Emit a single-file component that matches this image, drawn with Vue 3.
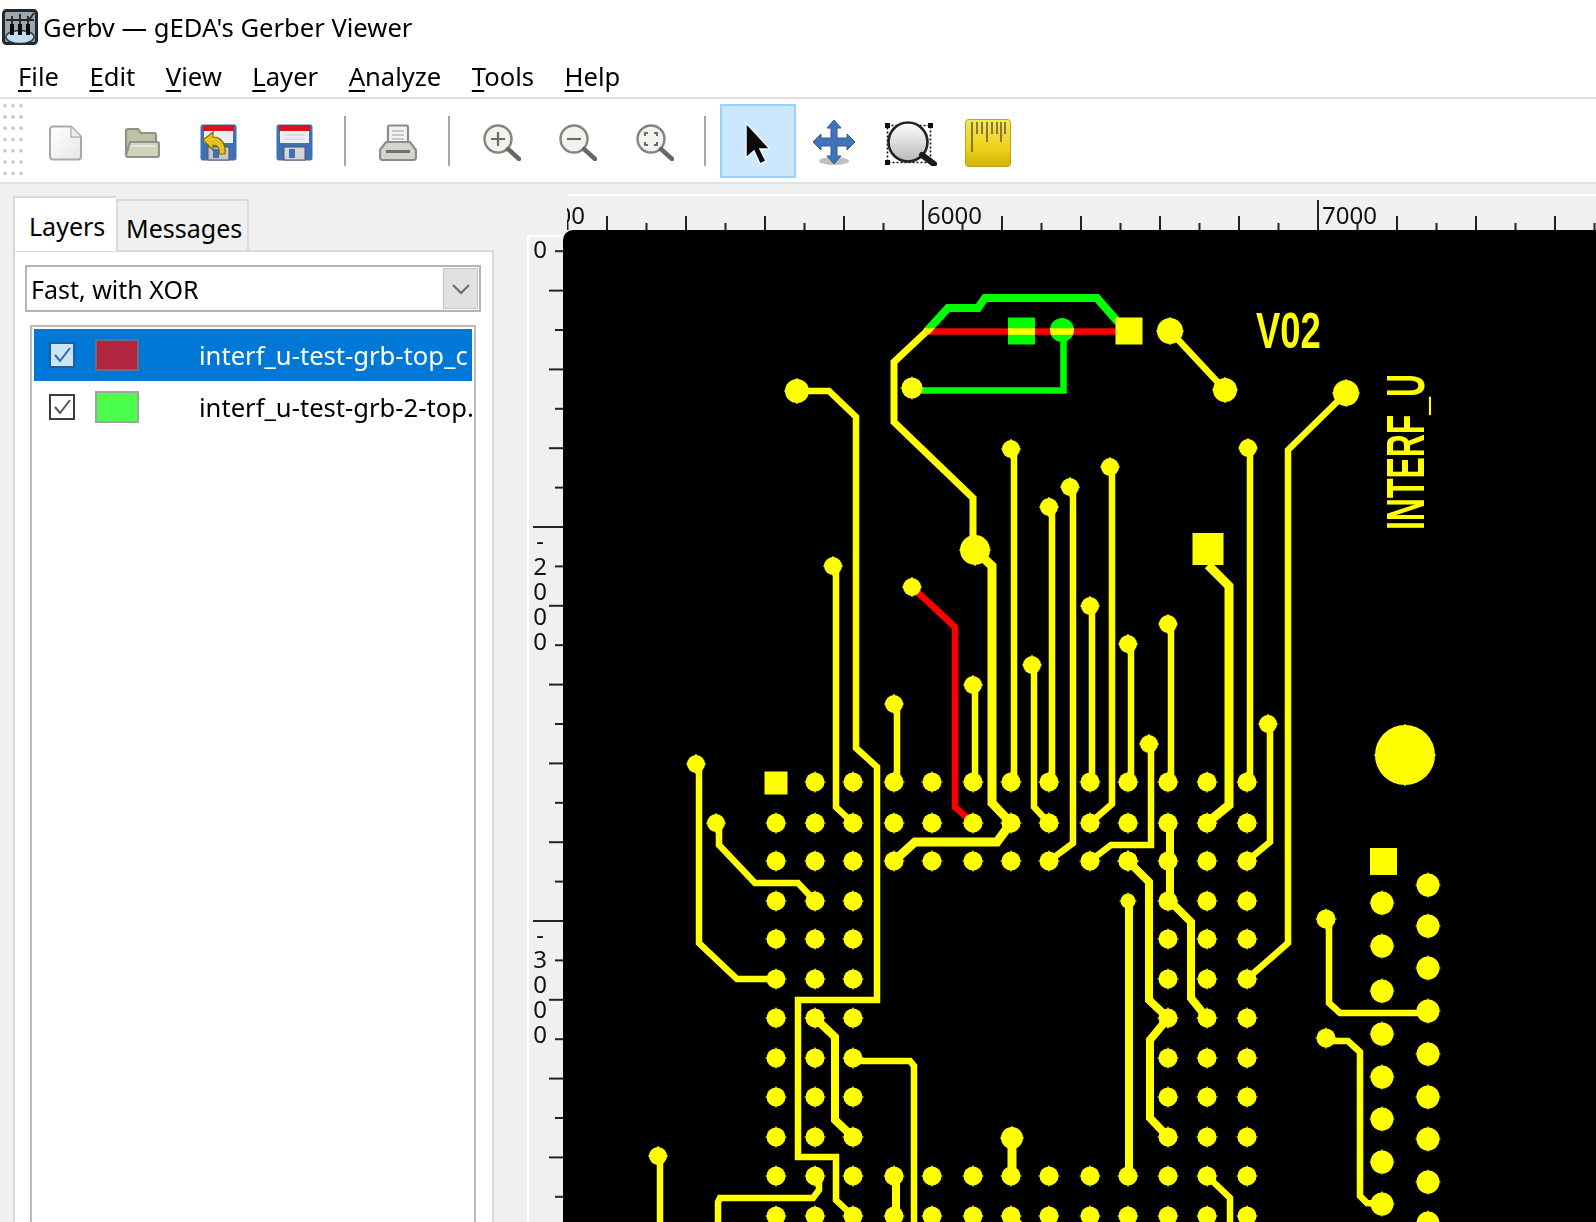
<script setup>
const cols = [776, 815, 853, 894, 932, 973, 1011, 1049, 1090, 1128, 1168, 1207, 1247]
const rows = [782, 823, 861, 901, 939, 979, 1018, 1058, 1097, 1137, 1176, 1216]
const fullRows = [782, 823, 861, 1176, 1216]
const sideCols = [776, 815, 853, 1168, 1207, 1247]

// [x, y, r]
const pads = []
for (const y of rows) {
  for (const x of cols) {
    if (x === 776 && y === 782) continue
    if (fullRows.includes(y) || sideCols.includes(x)) pads.push([x, y, 9.5])
  }
}
for (const y of [903, 946, 991, 1034, 1077, 1119, 1162, 1204]) pads.push([1382, y, 11.5])
for (const y of [885, 926, 968, 1011, 1054, 1097, 1139, 1182, 1223]) pads.push([1428, y, 11.5])
pads.push(
  [797, 391, 12], [912, 388, 10.5], [1170, 331, 13], [1225, 390, 12], [1346, 393, 13],
  [975, 550, 15], [1011, 449, 9], [1248, 448, 9], [1110, 467, 9], [1070, 487, 9],
  [1049, 507, 9], [1090, 606, 9], [1128, 644, 9], [1168, 624, 9], [1149, 744, 9],
  [1268, 724, 9], [833, 566, 9], [696, 764, 9], [716, 823, 9], [894, 704, 9],
  [973, 685, 9], [912, 587, 9], [1032, 665, 9], [1128, 861, 9.5], [1128, 901, 7.5],
  [1326, 919, 9.5], [1326, 1038, 9.5], [658, 1156, 9], [1012, 1138, 11], [1405, 755, 30]
)

const squares = [
  [764.5, 771.5, 23, 23],
  [1115.5, 317.5, 27, 27],
  [1192.5, 533, 31, 32],
  [1370, 848, 27, 27]
]

const traces = [
  { w: 7, p: '926,332 894,362 894,422 973,498 973,537' },
  { w: 9, p: '975,550 992,566 992,803 1011,823 997,842 915,842 894,861' },
  { w: 6.5, p: '1170,331 1225,390' },
  { w: 6.5, p: '1346,393 1288,450 1288,943 1247,979' },
  { w: 6.5, p: '1014,452 1014,782' },
  { w: 6.5, p: '1250,452 1250,782' },
  { w: 6.5, p: '1112,470 1112,804 1090,823' },
  { w: 6.5, p: '1073,490 1073,843 1049,861' },
  { w: 6.5, p: '1052,510 1052,782' },
  { w: 6.5, p: '1092,610 1092,782' },
  { w: 6.5, p: '1131,648 1131,782' },
  { w: 6.5, p: '1171,628 1171,782' },
  { w: 6.5, p: '1151,748 1151,845 1111,845 1090,861' },
  { w: 6.5, p: '1270,728 1270,842 1247,861' },
  { w: 9, p: '1208,565 1229,586 1229,805 1207,823' },
  { w: 6.5, p: '836,570 836,807 853,823' },
  { w: 6.5, p: '797,391 829,391 856,417 856,748 877,767 877,1000 798,1000 798,1157 836,1157 836,1200 853,1216' },
  { w: 6.5, p: '699,768 699,943 737,979 776,979' },
  { w: 6.5, p: '719,827 719,845 755,883 798,883 815,901' },
  { w: 6.5, p: '897,708 897,782' },
  { w: 6.5, p: '975,690 975,782' },
  { w: 6.5, p: '1034,670 1034,807 1049,823' },
  { w: 8, p: '1170,826 1170,901 1191,922 1191,998 1207,1018' },
  { w: 8, p: '1128,861 1149,882 1149,1000 1168,1018 1150,1040 1150,1118 1168,1137' },
  { w: 8, p: '1129,905 1129,1176' },
  { w: 6.5, p: '1329,923 1329,1003 1340,1013 1428,1013' },
  { w: 6.5, p: '1326,1041 1348,1041 1360,1052 1360,1196 1367,1203 1382,1204' },
  { w: 8, p: '815,1018 835,1037 835,1120 853,1137' },
  { w: 6.5, p: '853,1061 910,1061 914,1066 914,1230' },
  { w: 6.5, p: '819,1180 819,1190 813,1198 720,1198 718,1202 718,1230' },
  { w: 6.5, p: '660,1160 660,1230' },
  { w: 8, p: '896,1180 896,1216' },
  { w: 9, p: '1012,1138 1012,1176' },
  { w: 8, p: '1011,1216 1030,1236' },
  { w: 6.5, p: '1207,1176 1230,1198 1230,1230' }
]

const topTicks = []
for (let k = -9; k <= 17; k++) {
  const major = k % 10 === 0
  const even = k % 2 === 0
  topTicks.push({ x: 923 + k * 39.5, y: major ? 200 : even ? 216 : 223 })
}
const leftTicks = []
for (let k = -7; k <= 17; k++) {
  const major = k % 10 === 0
  const even = k % 2 === 0
  leftTicks.push({ y: 527 + k * 39.4, x: major ? 533 : even ? 549 : 555 })
}
const leftLabels = [
  ['0', 258], ['-', 549], ['2', 575], ['0', 600], ['0', 625], ['0', 650],
  ['-', 943], ['3', 968], ['0', 993], ['0', 1018], ['0', 1043]
]

const menus = [
  { key: 'F', rest: 'ile' },
  { key: 'E', rest: 'dit' },
  { key: 'V', rest: 'iew' },
  { key: 'L', rest: 'ayer' },
  { key: 'A', rest: 'nalyze' },
  { key: 'T', rest: 'ools' },
  { key: 'H', rest: 'elp' }
]
</script>

<template>
  <div class="app">
    <header class="titlebar">
      <svg class="appicon" width="36" height="36" viewBox="0 0 36 36">
        <rect x="1.5" y="1.5" width="33" height="33" rx="3" fill="#9aa7b0" stroke="#24282b" stroke-width="3" />
        <ellipse cx="18" cy="28" rx="14" ry="6.5" fill="#c4dcee" stroke="#2e3438" stroke-width="1.5" />
        <path d="M10 7v10M18 5v12M26 7v10" stroke="#111" stroke-width="1.6" fill="none" />
        <path d="M10 15v11M18 15v11M26 15v11" stroke="#0b0b0b" stroke-width="4" fill="none" />
        <path d="M4 11h28M27 11l5-7" stroke="#23272a" stroke-width="1.8" fill="none" />
      </svg>
      <span class="title">Gerbv — gEDA's Gerber Viewer</span>
    </header>

    <nav class="menubar">
      <span v-for="m in menus" :key="m.key" class="menu"><span class="mn">{{ m.key }}</span>{{ m.rest }}</span>
    </nav>

    <div class="toolbar">
      <div class="grip"></div>
      <div class="tool">
        <svg width="34" height="36" viewBox="0 0 34 36">
          <defs>
            <linearGradient id="paper" x1="0" y1="0" x2="1" y2="1">
              <stop offset="0" stop-color="#ffffff" />
              <stop offset="1" stop-color="#e6e6e4" />
            </linearGradient>
          </defs>
          <path d="M4 1.5h18l10 10v20a3 3 0 0 1-3 3H4a3 3 0 0 1-3-3v-27a3 3 0 0 1 3-3z" fill="url(#paper)" stroke="#a9aaa4" stroke-width="2" />
          <path d="M22 2v10h10" fill="#ececea" stroke="#b5b6b0" stroke-width="1.5" />
        </svg>
      </div>
      <div class="tool">
        <svg width="36" height="32" viewBox="0 0 36 32">
          <path d="M2 28V4a2 2 0 0 1 2-2h10l3 4h13a2 2 0 0 1 2 2v6" fill="#bcc3a3" stroke="#8f9387" stroke-width="2.2" />
          <path d="M6 15h27a2 2 0 0 1 2 2v11a2 2 0 0 1-2 2H4a2 2 0 0 1-2-2z" fill="#cfd5ba" stroke="#8f9387" stroke-width="2.2" />
          <path d="M6 19h26" stroke="#e4e8d6" stroke-width="2" />
        </svg>
      </div>
      <div class="tool">
        <svg width="37" height="37" viewBox="0 0 37 37">
          <rect x="0.5" y="0.5" width="36" height="36" rx="2.5" fill="#3f6fb4" />
          <rect x="3" y="1" width="31" height="6" fill="#d9141c" />
          <rect x="4" y="7" width="29" height="12" fill="#eceff2" />
          <rect x="8" y="23" width="21" height="13" fill="#c6c8c8" stroke="#555" />
          <rect x="13" y="25" width="6" height="9" fill="#3f6fb4" />
          <path d="M3 16l10-8v5c7 0 13 5 12 17h-6c1-6-1-9-6-9v5z" fill="#e6c41b" stroke="#7c6b14" stroke-width="1.2" />
        </svg>
      </div>
      <div class="tool">
        <svg width="37" height="37" viewBox="0 0 37 37">
          <rect x="0.5" y="0.5" width="36" height="36" rx="2.5" fill="#3f6fb4" />
          <rect x="3" y="1" width="31" height="6" fill="#d9141c" />
          <rect x="4" y="7" width="29" height="12" fill="#eceff2" />
          <path d="M8 11h21M8 15h21" stroke="#d5d8dc" stroke-width="1.4" />
          <rect x="8" y="23" width="21" height="13" fill="#d4d6d6" stroke="#555" />
          <rect x="13" y="25" width="6" height="9" fill="#3f6fb4" />
        </svg>
      </div>
      <div class="sep"></div>
      <div class="tool">
        <svg width="38" height="37" viewBox="0 0 38 37">
          <rect x="9" y="1.5" width="20" height="20" rx="1.5" fill="#f3f3f1" stroke="#8c8d88" stroke-width="2.2" />
          <path d="M13 7h12M13 11h12M13 15h12" stroke="#bcbcb8" stroke-width="1.5" />
          <path d="M7 18h24l6 8v7a3 3 0 0 1-3 3H4a3 3 0 0 1-3-3v-7z" fill="#d3d3cf" stroke="#8c8d88" stroke-width="2.2" />
          <path d="M7 27.5h24" stroke="#6f706c" stroke-width="3" />
        </svg>
      </div>
      <div class="sep"></div>
      <div class="tool">
        <svg width="38" height="37" viewBox="0 0 38 37">
          <circle cx="15" cy="15" r="13.5" fill="#f1f3ef" stroke="#83857f" stroke-width="2.4" />
          <path d="M8 15h14M15 8v14" stroke="#6b6d68" stroke-width="2.2" />
          <path d="M25 25l11 10" stroke="#666862" stroke-width="4.4" stroke-linecap="round" />
        </svg>
      </div>
      <div class="tool">
        <svg width="38" height="37" viewBox="0 0 38 37">
          <circle cx="15" cy="15" r="13.5" fill="#f1f3ef" stroke="#83857f" stroke-width="2.4" />
          <path d="M8 15h14" stroke="#6b6d68" stroke-width="2.2" />
          <path d="M25 25l11 10" stroke="#666862" stroke-width="4.4" stroke-linecap="round" />
        </svg>
      </div>
      <div class="tool">
        <svg class="nudge" width="38" height="37" viewBox="0 0 38 37">
          <circle cx="15" cy="15" r="13.5" fill="#f1f3ef" stroke="#83857f" stroke-width="2.4" />
          <path d="M12 9H9v3M18 9h3v3M12 21H9v-3M18 21h3v-3" stroke="#6b6d68" stroke-width="2" fill="none" />
          <path d="M25 25l11 10" stroke="#666862" stroke-width="4.4" stroke-linecap="round" />
        </svg>
      </div>
      <div class="sep"></div>
      <div class="tool active">
        <svg class="pointer" width="30" height="46" viewBox="0 0 30 46">
          <path d="M6 3v35l8-7 6 13 6-3-6-12h10z" fill="#0b0b0b" stroke="#f4f8fb" stroke-width="1.5" />
        </svg>
      </div>
      <div class="tool">
        <svg width="46" height="48" viewBox="0 0 46 48">
          <ellipse cx="23" cy="42" rx="15" ry="4" fill="#8a8a8a" opacity="0.55" />
          <path d="M23 1l7 8h-4v10h10v-4l8 8-8 8v-4H26v10h4l-7 8-7-8h4V27H10v4l-8-8 8-8v4h10V9h-4z" fill="#3f74b8" stroke="#2f5a94" stroke-width="1" />
        </svg>
      </div>
      <div class="tool">
        <svg class="nudge" width="54" height="46" viewBox="0 0 54 46">
          <defs>
            <linearGradient id="glass" x1="0" y1="0" x2="0" y2="1">
              <stop offset="0" stop-color="#ffffff" />
              <stop offset="1" stop-color="#b9b9b9" />
            </linearGradient>
          </defs>
          <rect x="3.5" y="5.5" width="43" height="37" fill="none" stroke="#111" stroke-width="1.6" stroke-dasharray="2 2" />
          <rect x="1" y="3" width="5" height="5" fill="#111" />
          <rect x="44" y="3" width="5" height="5" fill="#111" />
          <rect x="1" y="40" width="5" height="5" fill="#111" />
          <circle cx="24" cy="22" r="19.5" fill="url(#glass)" stroke="#222" stroke-width="2.6" />
          <path d="M38 35l12 9" stroke="#1a1a1a" stroke-width="6" stroke-linecap="round" />
        </svg>
      </div>
      <div class="tool">
        <svg class="nudge-more" width="46" height="48" viewBox="0 0 46 48">
          <defs>
            <linearGradient id="gold" x1="0" y1="0" x2="0" y2="1">
              <stop offset="0" stop-color="#f6e65a" />
              <stop offset="0.6" stop-color="#eed21a" />
              <stop offset="1" stop-color="#d3b408" />
            </linearGradient>
          </defs>
          <rect x="0.5" y="0.5" width="45" height="47" rx="3" fill="url(#gold)" stroke="#b9a31f" />
          <path d="M7 3v30M12 3v12M17 3v12M22 3v20M27 3v12M32 3v12M36 3v20M40 3v12" stroke="#6e6130" stroke-width="1.6" />
        </svg>
      </div>
    </div>

    <main class="main">
      <aside class="side">
        <div class="tabs">
          <div class="tab current">Layers</div>
          <div class="tab">Messages</div>
        </div>
        <div class="panel">
          <div class="combo">
            <span class="combo-text">Fast, with XOR</span>
            <span class="combo-btn">
              <svg width="20" height="12" viewBox="0 0 20 12">
                <path d="M2 2l8 8 8-8" fill="none" stroke="#6a6a6a" stroke-width="2" />
              </svg>
            </span>
          </div>
          <div class="list">
            <div class="row selected">
              <span class="check">
                <svg width="22" height="22" viewBox="0 0 22 22">
                  <path d="M4 11l5 6 10-13" fill="none" stroke="#2a6aa8" stroke-width="2" />
                </svg>
              </span>
              <span class="swatch red"></span>
              <span class="name">interf_u-test-grb-top_c</span>
            </div>
            <div class="row">
              <span class="check">
                <svg width="22" height="22" viewBox="0 0 22 22">
                  <path d="M4 11l5 6 10-13" fill="none" stroke="#555" stroke-width="2" />
                </svg>
              </span>
              <span class="swatch green"></span>
              <span class="name">interf_u-test-grb-2-top.</span>
            </div>
          </div>
        </div>
      </aside>

      <section class="view">
        <div class="corner"></div>
        <svg class="ruler-top" viewBox="567 194 1029 36" preserveAspectRatio="xMinYMin">
          <rect x="567" y="194" width="1029" height="2" fill="#fff" />
          <path v-for="t in topTicks" :key="t.x" :d="`M${t.x} ${t.y}V230`" stroke="#222" stroke-width="2" />
          <text class="ruler-text" x="530" y="224">5000</text>
          <text class="ruler-text" x="927" y="224">6000</text>
          <text class="ruler-text" x="1322" y="224">7000</text>
        </svg>
        <svg class="ruler-left" viewBox="527 235 36 987" preserveAspectRatio="xMinYMin">
          <rect x="527" y="235" width="2" height="987" fill="#fff" />
          <rect x="527" y="235" width="36" height="2" fill="#fff" />
          <path v-for="t in leftTicks" :key="t.y" :d="`M${t.x} ${t.y}H563`" stroke="#222" stroke-width="2" />
          <text v-for="l in leftLabels" :key="l[1]" class="ruler-text" x="540" :y="l[1]" text-anchor="middle">{{ l[0] }}</text>
        </svg>

        <svg class="board" viewBox="563 230 1033 992" preserveAspectRatio="xMinYMin">
          <g class="layer-green">
            <polyline points="926,332 948,308 978,308 985,298 1097,298 1118,322" fill="none" stroke="#0f0" stroke-width="8" />
            <polyline points="1063.5,330 1063.5,390.5 912,390.5" fill="none" stroke="#0f0" stroke-width="6.5" />
            <rect x="1008" y="317.5" width="27" height="27" fill="#0f0" />
            <circle cx="1062" cy="330" r="12" fill="#0f0" />
          </g>
          <g class="layer-red">
            <line x1="924" y1="331.5" x2="1118" y2="331.5" stroke="#f00" stroke-width="6.5" />
            <polyline points="912,587 955,627 955,807 973,823" fill="none" stroke="#f00" stroke-width="6.5" />
          </g>

          <g fill="none" stroke="#ff0" stroke-linejoin="miter">
            <polyline v-for="t in traces" :key="t.p" :points="t.p" :stroke-width="t.w" />
          </g>
          <g fill="#ff0">
            <rect v-for="s in squares" :key="s[0]" :x="s[0]" :y="s[1]" :width="s[2]" :height="s[3]" />
            <template v-for="p in pads" :key="`${p[0]}-${p[1]}`">
              <circle :cx="p[0]" :cy="p[1]" :r="p[2]" />
              <path :d="`M${p[0] - p[2] - 1} ${p[1]}h${2 * p[2] + 2}M${p[0]} ${p[1] - p[2] - 1}v${2 * p[2] + 2}`" stroke="#ff0" stroke-width="1.2" />
            </template>
          </g>
          <text class="silk" transform="translate(1256 348) scale(1.3 1.8)">V02</text>
          <text class="silk" transform="translate(1424 530) rotate(-90) scale(1.14 1.9)">INTERF_U</text>
        </svg>
      </section>
    </main>
  </div>
</template>

<style>
html, body {
  margin: 0;
  background: #f0f0f0;
  overflow: hidden;
}
</style>

<style scoped>
.app {
  width: 1596px;
  height: 1222px;
  display: flex;
  flex-direction: column;
  font-family: "Noto Sans", "Open Sans", sans-serif;
  font-size: 25px;
  color: #000;
  overflow: hidden;
}

.titlebar {
  height: 54px;
  display: flex;
  align-items: center;
  background: #fff;
  padding-left: 2px;
}
.appicon {
  margin-right: 5px;
}
.title {
  font-size: 25.6px;
}

.menubar {
  height: 41px;
  padding-top: 2px;
  display: flex;
  align-items: center;
  gap: 30.5px;
  padding-left: 18px;
  background: #fff;
  border-bottom: 2px solid #e2e2e2;
  font-size: 25.6px;
}
.mn {
  text-decoration: underline;
  text-underline-offset: 4px;
}

.toolbar {
  height: 83px;
  display: flex;
  align-items: center;
  background: #fff;
  border-bottom: 2px solid #e2e2e2;
  padding-left: 28px;
  position: relative;
}
.grip {
  position: absolute;
  left: 1px;
  top: 1px;
  width: 24px;
  height: 83px;
  background-image: radial-gradient(circle, #c6c6c6 1.4px, transparent 2px);
  background-size: 8px 11.3px;
}
.tool {
  width: 76px;
  height: 74px;
  display: flex;
  align-items: center;
  justify-content: center;
  box-sizing: border-box;
}
.tool svg {
  margin-top: 4px;
}
.tool svg.pointer {
  margin-left: -6px;
}
.tool svg.nudge {
  margin-left: 2px;
}
.tool svg.nudge-more {
  margin-left: 4px;
}
.tool.active {
  background: #cce8ff;
  border: 2px solid #99d1ff;
}
.sep {
  width: 2px;
  height: 50px;
  background: #a8a8a8;
  margin: 0 14px 0 12px;
}

.main {
  flex: 1;
  min-height: 0;
  display: flex;
  background: #f0f0f0;
}

.side {
  width: 481px;
  margin-left: 13px;
  padding-top: 12px;
  display: flex;
  flex-direction: column;
}
.tabs {
  display: flex;
  align-items: flex-end;
  height: 55px;
  margin-bottom: -1px;
  position: relative;
  z-index: 1;
}
.tab {
  box-sizing: border-box;
  width: 133px;
  height: 51px;
  padding: 10px 0 0 8px;
  border: 2px solid #d9d9d9;
  border-bottom: none;
  background: #f0f0f0;
  margin-bottom: 1px;
}
.tab.current {
  width: 103px;
  height: 55px;
  padding: 11px 0 0 14px;
  background: #fff;
  border-right: none;
  margin-bottom: 0;
}
.panel {
  flex: 1;
  min-height: 0;
  overflow: hidden;
  box-sizing: border-box;
  background: #fff;
  border: 2px solid #d9d9d9;
  border-bottom: none;
  padding: 13px 11px 0 10px;
}
.combo {
  height: 47px;
  box-sizing: border-box;
  display: flex;
  align-items: center;
  border: 2px solid #b4b4b4;
  padding-left: 4px;
}
.combo-text {
  flex: 1;
}
.combo-btn {
  width: 37px;
  height: 100%;
  box-sizing: border-box;
  display: flex;
  align-items: center;
  justify-content: center;
  background: #e1e1e1;
  border: 2px solid #fff;
  outline: 1px solid #c8c8c8;
  outline-offset: -2px;
}
.list {
  margin: 13px 5px 0 5px;
  height: 920px;
  box-sizing: border-box;
  border: 2px solid #bcbcbc;
  padding: 2px;
  font-size: 25.6px;
}
.row {
  height: 52px;
  display: flex;
  align-items: center;
  overflow: hidden;
  white-space: nowrap;
}
.row.selected {
  background: #0078d7;
  color: #fff;
}
.check {
  flex: none;
  width: 26px;
  height: 26px;
  box-sizing: border-box;
  margin-left: 15px;
  display: flex;
  align-items: center;
  justify-content: center;
  border: 2px solid #3c3c3c;
  background: #fff;
}
.selected .check {
  background: #cce4f7;
  border-color: #1d5f99;
}
.swatch {
  flex: none;
  width: 44px;
  height: 32px;
  box-sizing: border-box;
  margin-left: 20px;
  border: 2px solid #a3a3a3;
}
.swatch.red {
  background: #b3243f;
  border-color: #6f6d86;
}
.swatch.green {
  background: #4cff4c;
}
.name {
  margin-left: 60px;
}

.view {
  flex: 1;
  min-width: 0;
  margin-left: 33px;
  margin-top: 10px;
  display: grid;
  grid-template-columns: 36px 1fr;
  grid-template-rows: 36px 1fr;
}
.ruler-top {
  display: block;
  width: 1029px;
  height: 36px;
  margin-left: 4px;
}
.ruler-left {
  display: block;
  width: 36px;
  height: 987px;
  margin-top: 5px;
}
.ruler-text {
  font-family: "Noto Sans", sans-serif;
  font-size: 24px;
  fill: #111;
}
.board {
  display: block;
  width: 1033px;
  height: 992px;
  background: #000;
  border-top-left-radius: 10px;
}
.layer-red {
  mix-blend-mode: screen;
}
.silk {
  font-family: "Liberation Sans", sans-serif;
  font-weight: 700;
  font-size: 28px;
  fill: #ff0;
}
</style>
